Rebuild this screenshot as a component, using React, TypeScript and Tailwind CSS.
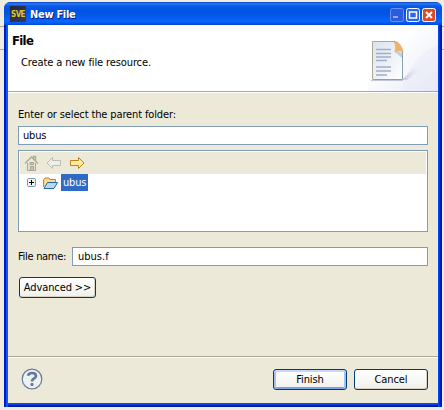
import React from "react";

type LabelProps = { children: React.ReactNode; className?: string };

function Label({ children, className = "" }: LabelProps) {
  return (
    <span className={`block whitespace-pre text-[11px] leading-[14px] ${className}`}>
      {children}
    </span>
  );
}

function TitleBar() {
  return (
    <div className="flex h-[23px] shrink-0 items-center rounded-t-[6px] bg-[linear-gradient(180deg,#0a3fc0_0%,#2a7df5_8%,#0a5be8_16%,#0053e1_35%,#0458ea_60%,#0666fe_85%,#0047d0_100%)] pl-[6px] pr-[6px]">
      <div className="mt-px flex h-[16px] w-[16px] shrink-0 items-center justify-center bg-linear-to-br from-[#232548] to-[#3d3858]">
        <span className="mt-px whitespace-pre text-[8px] font-bold leading-[14px] tracking-[-0.6px] text-[#d8cc28]">SVE</span>
      </div>
      <span className="ml-[4px] mt-[2px] grow whitespace-pre text-[11px] font-bold leading-[14px] tracking-[-0.3px] text-white [text-shadow:1px_1px_#0a1883]">New File</span>
      <div className="mt-[2px] flex gap-[2px]">
        <svg width="14" height="14" viewBox="0 0 14 14">
          <rect x=".5" y=".5" width="13" height="13" rx="2" fill="#2a5be0" stroke="#7090e8" />
          <path d="M3 8h5v2H3z" fill="#94a9ec" />
        </svg>
        <svg width="14" height="14" viewBox="0 0 14 14">
          <rect x=".5" y=".5" width="13" height="13" rx="2" fill="#2c66ee" stroke="#fff" />
          <path d="M3.500 4h7v6h-7z" fill="none" stroke="#fff" strokeWidth="1.500" />
        </svg>
        <svg width="14" height="14" viewBox="0 0 14 14">
          <rect x=".5" y=".5" width="13" height="13" rx="2" fill="#dc4a24" stroke="#fff" />
          <path d="M4 4l6 6M10 4l-6 6" stroke="#fff" strokeWidth="2" />
        </svg>
      </div>
    </div>
  );
}

function FileBanner() {
  return (
    <svg width="75" height="66" viewBox="0 0 75 66" className="shrink-0">
      <defs>
        <linearGradient id="bannerGlow" x1="0" y1="0" x2="1" y2="1">
          <stop offset="0.350" stopColor="#ffffff" />
          <stop offset="1" stopColor="#e2e5f5" />
        </linearGradient>
        <linearGradient id="paper" x1="0" y1="0" x2="1" y2="1">
          <stop offset="0" stopColor="#d9e3ef" />
          <stop offset="1" stopColor="#ffffff" />
        </linearGradient>
        <linearGradient id="sheetShadow" x1="0" y1="0" x2="1" y2="0">
          <stop offset="0" stopColor="#bfc2d8" />
          <stop offset="1" stopColor="#e6e8f5" stopOpacity="0" />
        </linearGradient>
      </defs>
      <path d="M4 66Q10 10 75 0V66z" fill="url(#bannerGlow)" opacity=".8" />
      <path d="M38 66Q48 30 75 20V66z" fill="#dfe3f5" opacity=".25" />
      <path d="M39 55L50 44Q60 42 57 46L44 55z" fill="url(#sheetShadow)" />
      <path d="M8 55.500H40" stroke="#c2c5d6" />
      <path d="M9.500 16.500H31.500L39.500 27V54.500H9.500z" fill="url(#paper)" />
      <path d="M9.500 54V16.500H32" fill="none" stroke="#aaa995" />
      <path d="M39.500 26V54.500H9.500" fill="none" stroke="#87a3ae" />
      <path d="M31 16Q38 17 40 27Q37 24 32 27Q34 21 31 16z" fill="#efb368" stroke="#dda055" strokeWidth=".6" />
      <path d="M32 27Q36 25 39 28V33z" fill="#c7cedb" />
      <path d="M13 24.500H28M13 28.500H28M13 32H28M13 35.500H24M13 42H28M13 46H28M13 50H24" stroke="#a1aec9" strokeWidth="1.500" />
    </svg>
  );
}

function FolderTree() {
  return (
    <div className="mt-[5px] h-[82px] border border-[#7f9db9] bg-white p-px">
      <div className="flex h-[22px] items-center gap-[7px] bg-[#ece9d8] pl-[4px]">
        <svg width="16" height="16" viewBox="0 0 16 16">
          <path d="M3.500 8v7.500h8V8" fill="#e2dfd0" stroke="#aaa898" />
          <path d="M1 8.500L7.500 2L14 8.500M11.500 6V1.500h-2V4" fill="none" stroke="#aaa898" strokeWidth="1.300" />
          <path d="M6.500 15V11.500h3V15M6 7.500h3.500v2H6z" fill="#c4c1b2" stroke="#aaa898" />
        </svg>
        <svg width="16" height="16" viewBox="0 0 16 16" className="-ml-px">
          <path d="M1 8L6.500 2.500V5.500H14.500V10.500H6.500V13.500z" fill="#eeeeea" stroke="#bebdb7" />
        </svg>
        <svg width="16" height="16" viewBox="0 0 16 16">
          <path d="M15 8L9.500 2.500V5.500H1.500V10.500H9.500V13.500z" fill="#ffed9d" stroke="#be8419" />
        </svg>
      </div>
      <div className="flex h-[17px] items-center">
        <svg width="9" height="9" viewBox="0 0 9 9" className="ml-[7px]">
          <rect x=".5" y=".5" width="8" height="8" rx="1" fill="#f1f0e9" stroke="#7898b5" />
          <path d="M2 4.500h5M4.500 2v5" stroke="#000" />
        </svg>
        <svg width="16" height="14" viewBox="0 0 16 14" className="ml-[6px]">
          <path d="M1.500 11V4L3 2H7L8 3.500H13.500V7" fill="#f8dc91" stroke="#b9872c" />
          <path d="M2 12.500L5.500 6.500H15.500L12 12.500z" fill="#b9d9fa" stroke="#2a65ae" />
        </svg>
        <div className="ml-[3px] flex h-[17px] w-[27px] items-center bg-[#316ac5] pl-[2px]">
          <Label className="mt-px tracking-[-0.2px] text-white">ubus</Label>
        </div>
      </div>
    </div>
  );
}

type ButtonProps = { children: string; className: string; primary?: boolean };

function DialogButton({ children, className, primary }: ButtonProps) {
  const inner = primary
    ? "shadow-[inset_0_2px_#c4d8fa,inset_2px_0_#a4bff0,inset_-2px_0_#a4bff0,inset_0_-2px_#7d9fe6]"
    : "shadow-[inset_-1px_-1px_#d6d0c5]";
  return (
    <button className={`flex h-[21px] items-center justify-center rounded-[3px] border border-[#003c74] bg-linear-to-b from-white to-[#f0f0ea] ${inner} ${className}`}>
      <Label className="mt-px tracking-[-0.1px]">{children}</Label>
    </button>
  );
}

function HelpIcon() {
  return (
    <svg width="22" height="22" viewBox="0 0 22 22">
      <circle cx="11" cy="11" r="9.800" fill="#eef1f2" stroke="#6c7f9c" strokeWidth="1.300" />
      <path d="M7 7.800Q7.500 5 11 5Q15 5 15 8Q15 9.500 13 10.500Q11 11.500 11 13.500" fill="none" stroke="#63779b" strokeWidth="2.600" />
      <rect x="9.500" y="15" width="3" height="3" rx="1" fill="#63779b" />
    </svg>
  );
}

export default function App() {
  return (
    <div className="h-[410px] w-[444px] overflow-hidden bg-[linear-gradient(180deg,#efece0_0_26px,#aaa899_26px_27px,#efece0_27px_49px,#aaa899_49px_50px,#efece0_50px)] pl-[4px] pt-[2px] font-['DejaVu_Sans_Condensed','DejaVu_Sans',sans-serif] text-black">
      <div className="flex h-[405px] w-[438px] flex-col rounded-t-[7px] bg-[linear-gradient(90deg,#0019cf_0_2px,#1058e8_2px_4px,#0048f0_4px_435px,#0019b0_436px)]">
        <TitleBar />
        <div className="mx-[4px] flex h-[378px] w-[430px] flex-col bg-[#ece9d8] shadow-[0_2px_#0848e8,0_4px_#0019a8]">
          <header className="flex h-[67px] shrink-0 justify-between border-b border-[#aca899] bg-white">
            <div className="pl-[4px] pt-[8px]">
              <h1 className="whitespace-pre text-[13px] font-bold leading-[16px] tracking-[-0.7px]">File</h1>
              <Label className="ml-[9px] mt-[7px] tracking-[-0.11px]">Create a new file resource.</Label>
            </div>
            <FileBanner />
          </header>
          <main className="h-[264px] shrink-0 border-t border-white px-[10px] pt-[15px]">
            <Label className="tracking-[-0.13px]">Enter or select the parent folder:</Label>
            <div className="mt-[4px] flex h-[19px] items-center border border-[#7f9db9] bg-white pl-[4px]">
              <Label className="mt-px tracking-[-0.2px]">ubus</Label>
            </div>
            <FolderTree />
            <div className="mt-[15px] flex h-[19px] items-center">
              <Label className="mt-px w-[54px] tracking-[-0.3px]">File name:</Label>
              <div className="flex h-[19px] grow items-center border border-[#7f9db9] bg-white pl-[5px]">
                <Label className="mt-px">ubus.f</Label>
              </div>
            </div>
            <DialogButton className="ml-[1px] mt-[11px] w-[77px]">{"Advanced >>"}</DialogButton>
          </main>
          <footer className="flex h-[47px] shrink-0 items-center border-t border-[#aca899] pb-[2px] pl-[13px] pr-[10px] shadow-[inset_0_1px_#fff]">
            <HelpIcon />
            <div className="ml-auto flex gap-[7px]">
              <DialogButton primary className="w-[74px]">Finish</DialogButton>
              <DialogButton className="w-[74px]">Cancel</DialogButton>
            </div>
          </footer>
        </div>
      </div>
    </div>
  );
}
